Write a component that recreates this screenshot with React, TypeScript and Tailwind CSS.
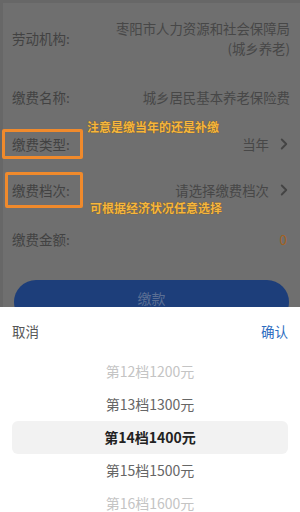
import { ChevronRight } from 'lucide-react';

const font = { fontFamily: '"Noto Sans CJK SC", "Noto Sans", sans-serif' };

const options = [
    { text: '第12档1200元', cls: 'text-[#c4c4c4]' },
    { text: '第13档1300元', cls: 'text-[#666]' },
    { text: '第14档1400元', cls: 'text-[#222] font-bold bg-[#f2f2f2] rounded-md' },
    { text: '第15档1500元', cls: 'text-[#666]' },
    { text: '第16档1600元', cls: 'text-[#c4c4c4]' },
];

const Row = ({
    label,
    children,
    className = '',
}: {
    label: string;
    children: React.ReactNode;
    className?: string;
}) => (
    <div className={`flex items-center justify-between pl-[9px] pr-[10px] ${className}`}>
        <span className="text-[13.5px] text-[#424242] shrink-0">{label}</span>
        <div className="flex items-center text-[13.4px] text-[#474747]">{children}</div>
    </div>
);

const App = () => {
    return (
        <div className="w-[300px] h-[512px] overflow-hidden bg-white" style={font}>
            {/* dimmed form behind the sheet */}
            <div className="relative h-[307px] overflow-hidden bg-[#676767] pt-[3px] pl-[3px]">
                <div className="h-full bg-[#6f6f6f] pt-[15px]">
                    <Row label="劳动机构:" className="h-[40px]">
                        <div className="text-right leading-[20px]">
                            <div>枣阳市人力资源和社会保障局</div>
                            <div>(城乡养老)</div>
                        </div>
                    </Row>
                    <Row label="缴费名称:" className="h-[20px] mt-[29px]">
                        城乡居民基本养老保险费
                    </Row>
                    <Row label="缴费类型:" className="h-[20px] mt-[27px]">
                        <span>当年</span>
                        <ChevronRight size={18} strokeWidth={2.5} className="ml-[6px] -mr-[3px] text-[#444]" />
                    </Row>
                    <Row label="缴费档次:" className="h-[20px] mt-[26px]">
                        <span>请选择缴费档次</span>
                        <ChevronRight size={18} strokeWidth={2.5} className="ml-[6px] -mr-[3px] text-[#444]" />
                    </Row>
                    <Row label="缴费金额:" className="h-[20px] mt-[29px]">
                        <span className="text-[#a4621f] pr-[3px]">0</span>
                    </Row>
                    <div className="mt-[31px] mx-[11px] h-[44px] rounded-[22px] bg-[#1d3e7a] flex items-start justify-center pt-[8px] text-[14px] leading-[20px] text-[#5b6f94]">
                        缴款
                    </div>
                </div>

                {/* annotations */}
                <div className="absolute left-[87px] top-[119px] text-[12px] font-bold leading-[16px] text-[#f6b63e] [text-shadow:0_0_1px_#6b4a10]">
                    注意是缴当年的还是补缴
                </div>
                <div className="absolute left-[2px] top-[129px] w-[81px] h-[30px] border-[3px] border-[#f08a2c] rounded-[2px]" />
                <div className="absolute left-[5px] top-[172px] w-[78px] h-[36px] border-[3px] border-[#f08a2c] rounded-[2px]" />
                <div className="absolute left-[90px] top-[200px] text-[12px] font-bold leading-[16px] text-[#f6b63e] [text-shadow:0_0_1px_#6b4a10]">
                    可根据经济状况任意选择
                </div>
            </div>

            {/* picker sheet */}
            <div className="bg-white">
                <div className="flex items-center justify-between h-[48px] px-[12px] text-[13.5px]">
                    <span className="text-[#555]">取消</span>
                    <span className="text-[#2d6cc0]">确认</span>
                </div>
                <div className="px-[12px]">
                    {options.map((o) => (
                        <div
                            key={o.text}
                            className={`h-[33px] flex items-center justify-center text-[14px] ${o.cls}`}
                        >
                            {o.text}
                        </div>
                    ))}
                </div>
            </div>
        </div>
    );
};

export default App;
